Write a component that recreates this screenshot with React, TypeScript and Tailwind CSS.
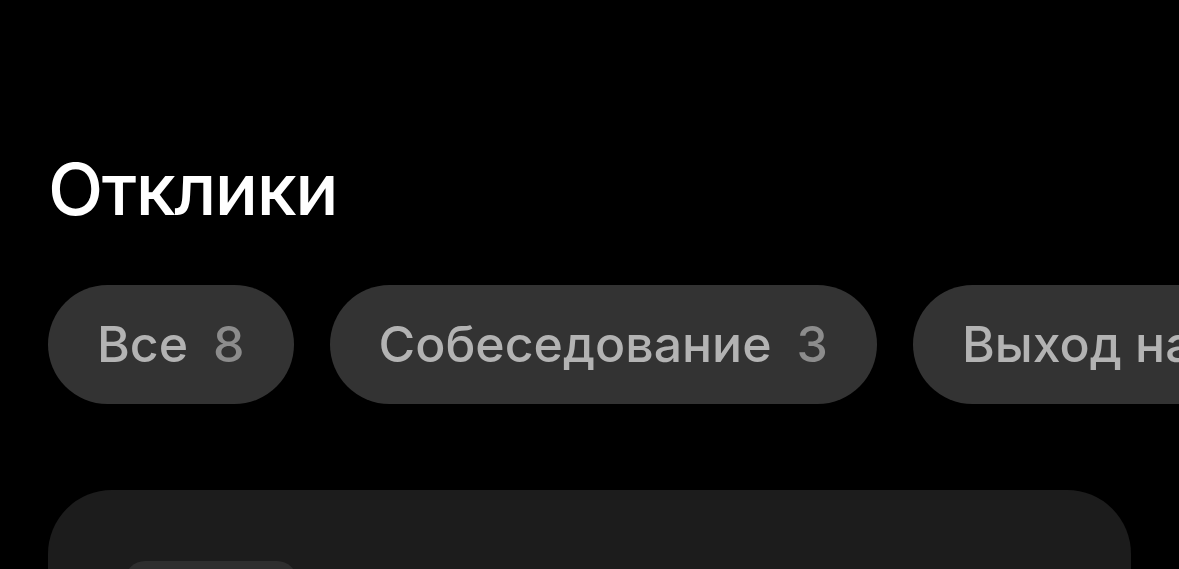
const filters = [
	{ label: "Все", count: 8 },
	{ label: "Собеседование", count: 3 },
	{ label: "Выход на работу", count: 2 },
]

export default function App() {
	return (
		<div
			className="h-[569px] w-full overflow-hidden bg-black"
			style={{ fontFamily: "Inter, 'Noto Sans', sans-serif" }}
		>
			<div className="px-[48px] pt-[153px]">
				<h1 className="text-[72px] font-medium leading-none tracking-[-1.5px] text-white">
					Отклики
				</h1>
			</div>

			{/* filter chips, last one runs off the screen */}
			<div className="mt-[60px] flex gap-[36px] overflow-hidden whitespace-nowrap pl-[48px]">
				{filters.map((f) => (
					<button
						key={f.label}
						className="flex h-[119px] shrink-0 items-center gap-[25px] rounded-full bg-[#333333] px-[49px] text-[50px] font-medium"
					>
						<span className="text-[#b3b3b3]">{f.label}</span>
						<span className="text-[#8c8c8c]">{f.count}</span>
					</button>
				))}
			</div>

			<div className="mx-[48px] mt-[86px] h-[400px] rounded-[64px] bg-[#1c1c1c] px-[77px] pt-[71px]">
				<div className="h-[60px] w-[172px] rounded-[20px] bg-[#2e2e2e]" />
			</div>
		</div>
	)
}
